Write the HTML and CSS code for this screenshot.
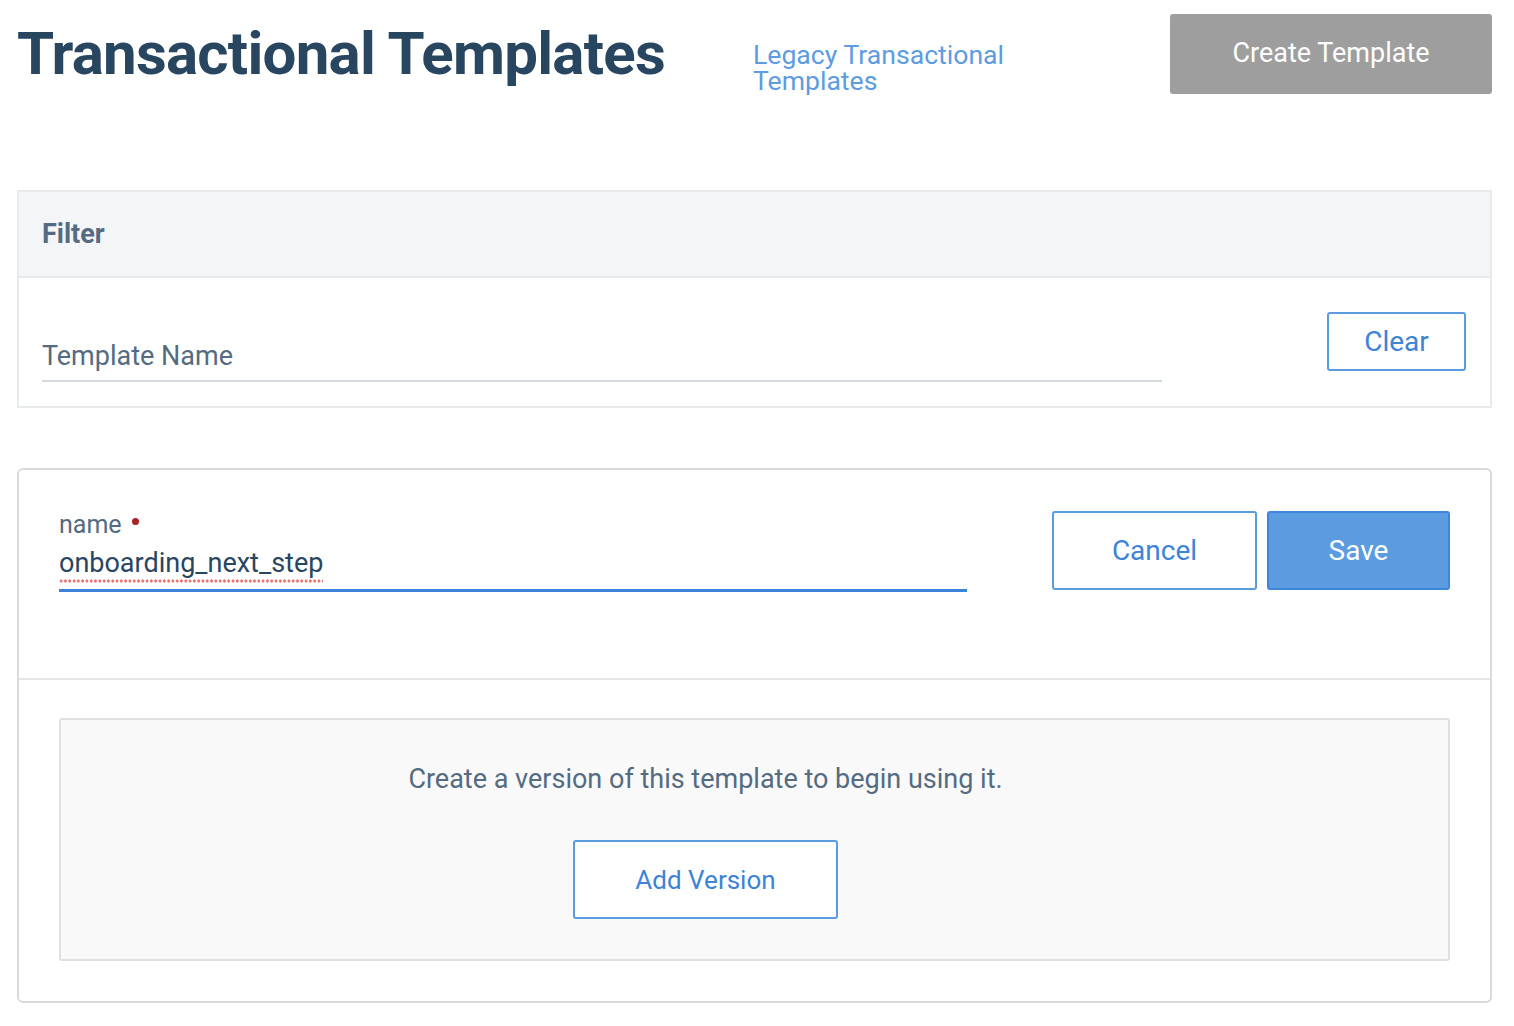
FILE: index.html
```html
<!DOCTYPE html>
<html lang="en">
<head>
<meta charset="utf-8">
<title>Transactional Templates</title>
<link rel="stylesheet" href="styles.css">
</head>
<body>
<div class="page">
  <header class="top">
    <h1 class="title">Transactional Templates</h1>
    <a class="legacy" href="#">Legacy Transactional<br>Templates</a>
    <button class="btn btn-gray">Create Template</button>
  </header>

  <section class="filter">
    <div class="filter-head">Filter</div>
    <div class="filter-body">
      <div class="filter-field">
        <span class="placeholder">Template Name</span>
      </div>
      <button class="btn btn-outline btn-clear">Clear</button>
    </div>
  </section>

  <section class="card">
    <div class="card-top">
      <div class="name-field">
        <div class="label">name <span class="req"></span></div>
        <div class="value"><span class="spell">onboarding_next_step</span></div>
      </div>
      <div class="actions">
        <button class="btn btn-outline btn-cancel">Cancel</button>
        <button class="btn btn-primary btn-save">Save</button>
      </div>
    </div>
    <div class="card-bottom">
      <div class="empty">
        <p class="empty-text">Create a version of this template to begin using it.</p>
        <button class="btn btn-outline btn-add">Add Version</button>
      </div>
    </div>
  </section>
</div>
</body>
</html>
```

FILE: styles.css
```css
* { box-sizing: border-box; }
html, body { margin: 0; padding: 0; background: #fff; }
body {
  font-family: Roboto, "Liberation Sans", Arial, sans-serif;
  color: #546b81;
}
.page {
  width: 1475px;
  margin-left: 17px;
  padding-top: 14px;
}
.top {
  display: flex;
  align-items: flex-start;
  height: 80px;
}
.title {
  margin: 0;
  margin-top: 10px;
  font-size: 60px;
  line-height: 60px;
  font-weight: 700;
  color: #294661;
  letter-spacing: -0.75px;
}
.legacy {
  margin-left: 88px;
  margin-top: 28px;
  font-size: 26.6px;
  line-height: 26px;
  color: #5d9ce2;
  text-decoration: none;
}
.btn {
  font-family: inherit;
  cursor: pointer;
  border-radius: 3px;
  font-size: 28px;
  padding: 0;
}
.btn-gray {
  margin-left: auto;
  width: 322px;
  height: 80px;
  background: #9e9e9e;
  border: none;
  color: #fff;
  font-size: 27px;
  padding-bottom: 2px;
}
.filter {
  margin-top: 96px;
  border: 2px solid #e8ebee;
}
.filter-head {
  height: 86px;
  background: #f4f5f7;
  border-bottom: 2px solid #e8ebee;
  padding-left: 23px;
  display: flex;
  align-items: center;
  font-weight: 700;
  font-size: 27px;
  color: #546b81;
}
.filter-body {
  display: flex;
  align-items: flex-start;
  justify-content: space-between;
  padding: 34px 24px 24px 23px;
}
.filter-field {
  width: 1120px;
  height: 70px;
  border-bottom: 2px solid #d4dadf;
  display: flex;
  align-items: flex-end;
  padding-bottom: 10px;
}
.placeholder {
  font-size: 27px;
  line-height: 28px;
  color: #546b81;
}
.btn-outline {
  background: #fff;
  border: 2px solid #5b9be0;
  color: #3d83d8;
}
.btn-clear {
  width: 139px;
  height: 59px;
}
.card {
  margin-top: 60px;
  border: 2px solid #dadada;
  border-radius: 6px;
}
.card-top {
  display: flex;
  justify-content: space-between;
  align-items: flex-start;
  padding: 41px 40px 0 40px;
  height: 210px;
  border-bottom: 2px solid #e6e6e6;
}
.name-field {
  width: 908px;
}
.label {
  font-size: 25px;
  line-height: 28px;
  color: #546b81;
  display: flex;
  align-items: center;
}
.req {
  display: inline-block;
  width: 7px;
  height: 7px;
  border-radius: 50%;
  background: #a82424;
  margin-left: 10px;
  margin-top: -8px;
}
.value {
  margin-top: 10px;
  font-size: 27px;
  line-height: 28px;
  color: #294661;
  padding-bottom: 12px;
  border-bottom: 3px solid #3a83d8;
}
.spell {
  padding-bottom: 4px;
  background-image: radial-gradient(circle, #ee7070 1.4px, transparent 1.8px);
  background-size: 4.3px 4px;
  background-repeat: repeat-x;
  background-position: left bottom;
}
.actions {
  display: flex;
  gap: 10px;
}
.btn-cancel {
  width: 205px;
  height: 79px;
}
.btn-primary {
  background: #5b9be0;
  border: 2px solid #3f86da;
  color: #fff;
}
.btn-save {
  width: 183px;
  height: 79px;
}
.card-bottom {
  padding: 38px 40px 40px 40px;
}
.empty {
  background: #f9f9f9;
  border: 2px solid #e0e0e0;
  border-radius: 3px;
  display: flex;
  flex-direction: column;
  align-items: center;
  padding: 44px 98px 40px 0;
}
.empty-text {
  margin: 0;
  font-size: 27px;
  line-height: 30px;
  color: #546b81;
}
.btn-add {
  margin-top: 46px;
  width: 265px;
  height: 79px;
  font-size: 26px;
}
```
